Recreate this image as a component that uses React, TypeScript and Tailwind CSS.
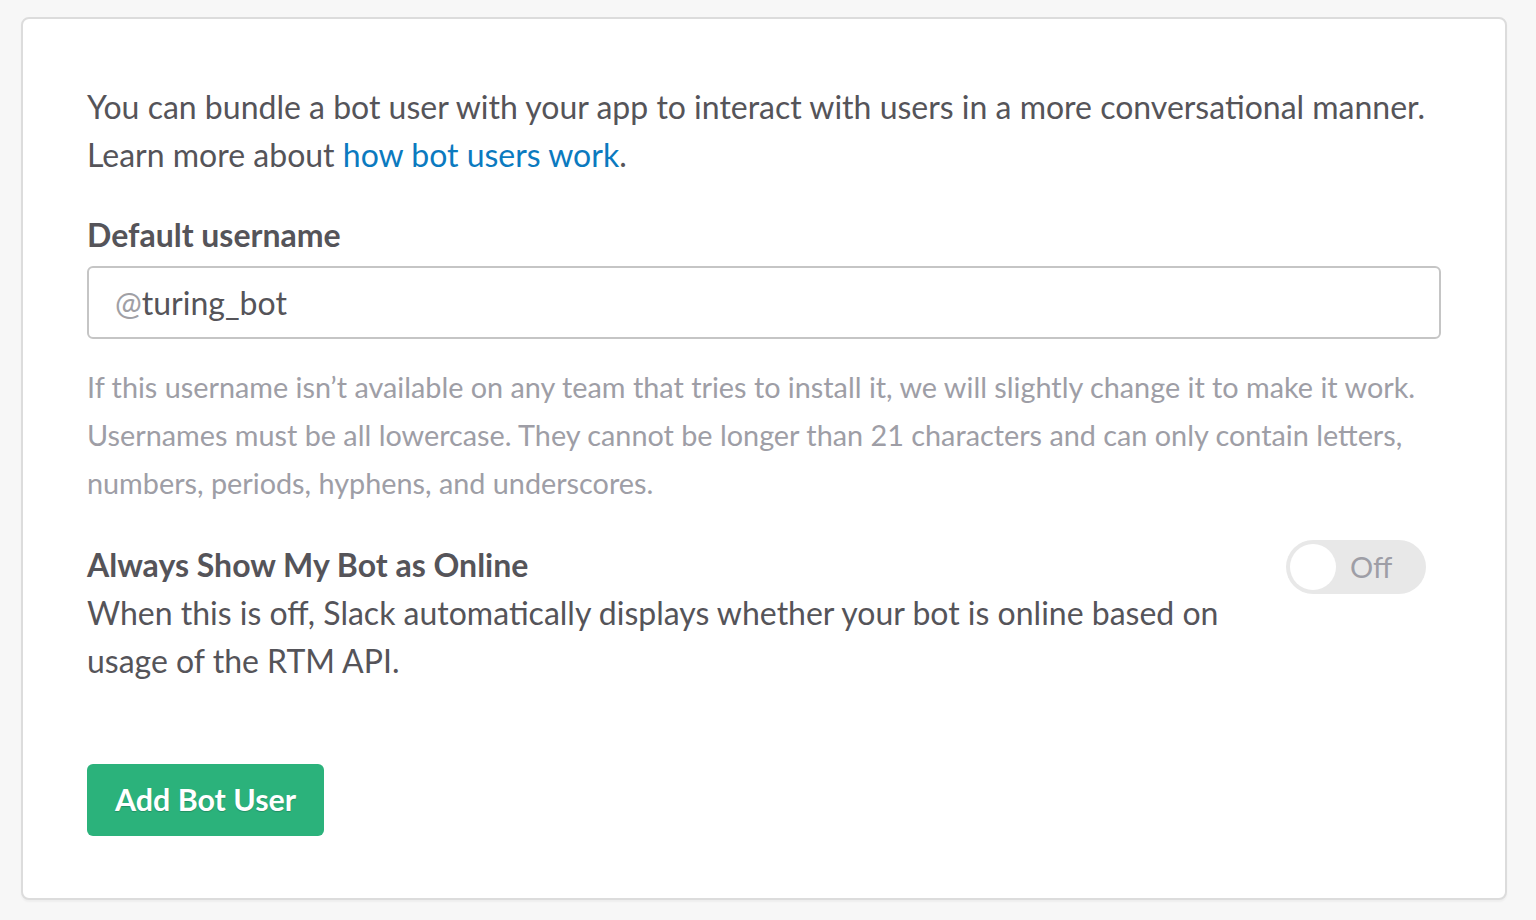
export default function App() {
  return (
    <div
      className="min-h-[920px] w-full bg-[#f7f7f7] pt-[17px] pl-[21px] pr-[29px]"
      style={{ fontFamily: "Lato, 'Noto Sans', sans-serif" }}
    >
      <div className="rounded-[8px] border-2 border-[#dcdcdc] bg-white pl-[64px] pr-[64px] pt-[64px] pb-[62px] shadow-[0_2px_2px_rgba(0,0,0,0.04)]">
        <p className="text-[32px] leading-[48px] text-[#555459]">
          You can bundle a bot user with your app to interact with users in a more conversational manner.
          <br />
          Learn more about{" "}
          <a href="#" className="text-[#0b7abf]">
            how bot users work
          </a>
          .
        </p>

        <label className="mt-[32px] block text-[32px] font-bold leading-[48px] text-[#555459]">
          Default username
        </label>
        <div className="mt-[7px] flex h-[73px] items-center rounded-[6px] border-2 border-[#c5c5c5] px-[26px] text-[32px] text-[#555459]">
          <span className="text-[#a0a0a5]">@</span>
          <span>turing_bot</span>
        </div>
        <p className="mt-[24px] text-[28.8px] leading-[48px] text-[#9e9ea6]">
          If this username isn’t available on any team that tries to install it, we will slightly change it to make it work.
          Usernames must be all lowercase. They cannot be longer than 21 characters and can only contain letters,
          numbers, periods, hyphens, and underscores.
        </p>

        <div className="mt-[34px] flex items-start justify-between">
          <div className="max-w-[1160px]">
            <div className="text-[32px] font-bold leading-[48px] text-[#555459]">Always Show My Bot as Online</div>
            <div className="text-[32px] leading-[48px] text-[#555459]">
              When this is off, Slack automatically displays whether your bot is online based on usage of the RTM API.
            </div>
          </div>
          <button className="-mt-[1px] mr-[15px] flex h-[54px] w-[140px] shrink-0 items-center rounded-full bg-[#e8e8e8] pl-[4px]">
            <span className="h-[46px] w-[46px] rounded-full bg-white" />
            <span className="ml-[14px] text-[29px] text-[#9e9ea6]">Off</span>
          </button>
        </div>

        <button className="mt-[79px] h-[72px] rounded-[6px] bg-[#2bb27b] px-[28px] text-[30.4px] font-bold text-white [text-shadow:0_1px_1px_rgba(0,0,0,0.2)]">
          Add Bot User
        </button>
      </div>
    </div>
  );
}
